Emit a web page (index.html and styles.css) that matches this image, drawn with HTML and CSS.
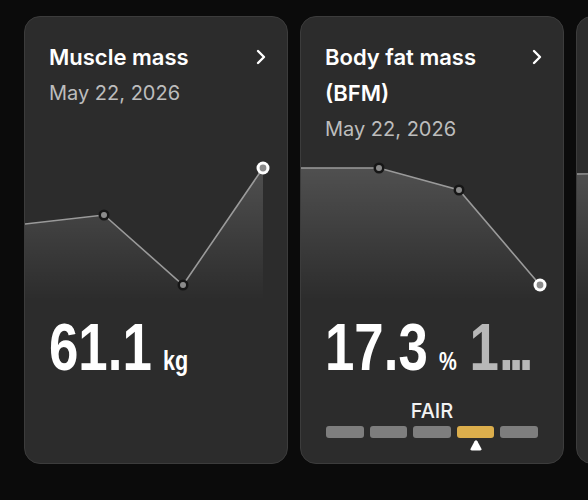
FILE: index.html
```html
<!DOCTYPE html>
<html lang="en">
<head>
<meta charset="utf-8">
<title>Body composition</title>
<link rel="stylesheet" href="styles.css">
</head>
<body>
<main class="cards">

  <!-- Muscle mass -->
  <section class="card">
    <header class="head">
      <div class="head-text">
        <h2 class="title">Muscle mass</h2>
        <p class="date">May 22, 2026</p>
      </div>
      <span class="chev"><svg width="10" height="16" viewBox="0 0 10 16"><path d="M2 2 L8 8 L2 14" fill="none" stroke="#fff" stroke-width="2.4" stroke-linecap="round" stroke-linejoin="round"/></svg></span>
    </header>
    <svg class="chart" width="262" height="160" viewBox="0 0 262 160">
      <defs>
        <linearGradient id="fillA" gradientUnits="userSpaceOnUse" x1="0" y1="18" x2="0" y2="150">
          <stop offset="0" stop-color="#fff" stop-opacity="0.17"/>
          <stop offset="1" stop-color="#fff" stop-opacity="0"/>
        </linearGradient>
      </defs>
      <polygon points="0,74 79,65 158,135 238,18 238,150 0,150" fill="url(#fillA)"/>
      <polyline points="0,74 79,65 158,135 238,18" fill="none" stroke="#9a9a9a" stroke-width="1.6"/>
      <circle cx="79" cy="65" r="5.5" fill="#161616"/><circle cx="79" cy="65" r="3" fill="#8a8a8a"/>
      <circle cx="158" cy="135" r="5.5" fill="#161616"/><circle cx="158" cy="135" r="3" fill="#8a8a8a"/>
      <circle cx="238" cy="18" r="6.5" fill="#fff"/><circle cx="238" cy="18" r="3.4" fill="#8a8a8a"/>
    </svg>
    <div class="value">
      <span class="num">61.1</span><span class="unit">kg</span>
    </div>
  </section>

  <!-- Body fat mass -->
  <section class="card">
    <header class="head">
      <div class="head-text">
        <h2 class="title">Body fat mass (BFM)</h2>
        <p class="date">May 22, 2026</p>
      </div>
      <span class="chev"><svg width="10" height="16" viewBox="0 0 10 16"><path d="M2 2 L8 8 L2 14" fill="none" stroke="#fff" stroke-width="2.4" stroke-linecap="round" stroke-linejoin="round"/></svg></span>
    </header>
    <svg class="chart" width="262" height="160" viewBox="0 0 262 160">
      <defs>
        <linearGradient id="fillB" gradientUnits="userSpaceOnUse" x1="0" y1="18" x2="0" y2="150">
          <stop offset="0" stop-color="#fff" stop-opacity="0.17"/>
          <stop offset="1" stop-color="#fff" stop-opacity="0"/>
        </linearGradient>
      </defs>
      <polygon points="0,18 78,18 158,40 239,135 239,150 0,150" fill="url(#fillB)"/>
      <polyline points="0,18 78,18 158,40 239,135" fill="none" stroke="#9a9a9a" stroke-width="1.6"/>
      <circle cx="78" cy="18" r="5.5" fill="#161616"/><circle cx="78" cy="18" r="3" fill="#8a8a8a"/>
      <circle cx="158" cy="40" r="5.5" fill="#161616"/><circle cx="158" cy="40" r="3" fill="#8a8a8a"/>
      <circle cx="239" cy="135" r="6.5" fill="#fff"/><circle cx="239" cy="135" r="3.4" fill="#8a8a8a"/>
    </svg>
    <div class="value">
      <span class="num">17.3</span><span class="unit pct">%</span><span class="num alt">1<span class="dots">...</span></span>
    </div>
    <div class="gauge">
      <span class="gauge-label">FAIR</span>
      <div class="segments">
        <span class="seg"></span><span class="seg"></span><span class="seg"></span><span class="seg on"></span><span class="seg"></span>
      </div>
      <div class="pointer-row">
        <span></span><span></span><span></span>
        <span class="pointer"><svg width="12" height="11" viewBox="0 0 12 11"><path d="M4.6 1.3 Q6 -0.6 7.4 1.3 L11.3 8.4 Q12 10.6 9.8 10.6 L2.2 10.6 Q0 10.6 0.7 8.4 Z" fill="#fff"/></svg></span>
        <span></span>
      </div>
    </div>
  </section>

  <!-- next card, scrolled mostly out of view -->
  <section class="card">
    <div class="head"></div>
    <svg class="chart" width="262" height="160" viewBox="0 0 262 160">
      <defs>
        <linearGradient id="fillC" gradientUnits="userSpaceOnUse" x1="0" y1="18" x2="0" y2="150">
          <stop offset="0" stop-color="#fff" stop-opacity="0.17"/>
          <stop offset="1" stop-color="#fff" stop-opacity="0"/>
        </linearGradient>
      </defs>
      <polygon points="0,24 78,22 158,46 239,120 239,150 0,150" fill="url(#fillC)"/>
      <polyline points="0,24 78,22 158,46 239,120" fill="none" stroke="#9a9a9a" stroke-width="1.6"/>
    </svg>
  </section>

</main>
</body>
</html>
```
FILE: styles.css
```css
html, body {
  margin: 0;
  padding: 0;
  background: #0b0b0b;
}

body {
  width: 588px;
  height: 500px;
  overflow: hidden;
  font-family: Inter, "Noto Sans", sans-serif;
  color: #fff;
}

.cards {
  display: flex;
  gap: 12px;
  padding: 16px 0 0 24px;
}

.card {
  flex: 0 0 264px;
  height: 448px;
  box-sizing: border-box;
  border: 1px solid #3c3c3c;
  border-radius: 16px;
  background: #2c2c2c;
  display: flex;
  flex-direction: column;
  overflow: hidden;
}

/* header: title, date and chevron */
.head {
  height: 133px;
  flex: none;
  box-sizing: border-box;
  padding: 22px 21px 0 24px;
  display: flex;
  justify-content: space-between;
  align-items: flex-start;
}

.head-text {
  width: 190px;
}

.title {
  margin: 0;
  font-size: 22px;
  line-height: 36px;
  font-weight: 600;
  color: #fff;
}

.date {
  margin: 0;
  font-size: 20px;
  line-height: 36px;
  font-weight: 400;
  color: #bdbdbd;
}

.chev {
  height: 36px;
  display: flex;
  align-items: center;
}

.chev svg {
  display: block;
}

/* trend chart */
.chart {
  display: block;
  flex: none;
}

/* headline value, set in a narrowed bold face */
.value {
  margin: 4px 0 0 24px;
  display: flex;
  align-items: baseline;
  white-space: nowrap;
  font-family: "Liberation Sans", Arial, sans-serif;
  font-weight: 700;
  transform: scaleX(0.8);
  transform-origin: left center;
}

.num {
  font-size: 66px;
  line-height: 66px;
  color: #fff;
}

.num.alt {
  color: #b8b8b8;
  margin-left: 16px;
}

.dots {
  letter-spacing: -6px;
}

.unit {
  font-size: 27px;
  margin-left: 14px;
  color: #fff;
}

.unit.pct {
  font-size: 25px;
}

/* status gauge */
.gauge {
  margin-top: auto;
  padding: 0 25px 12px;
  display: flex;
  flex-direction: column;
  align-items: center;
}

.gauge-label {
  font-size: 20px;
  line-height: 24px;
  font-weight: 500;
  color: #f2f2f2;
}

.segments,
.pointer-row {
  align-self: stretch;
  display: grid;
  grid-template-columns: repeat(5, 1fr);
  column-gap: 6px;
}

.segments {
  margin-top: 3px;
}

.seg {
  height: 12px;
  border-radius: 3px;
  background: #7e7e7e;
}

.seg.on {
  background: #dcae4c;
}

.pointer-row {
  margin-top: 2px;
  height: 11px;
}

.pointer {
  display: flex;
  justify-content: center;
}

.pointer svg {
  display: block;
}
```
